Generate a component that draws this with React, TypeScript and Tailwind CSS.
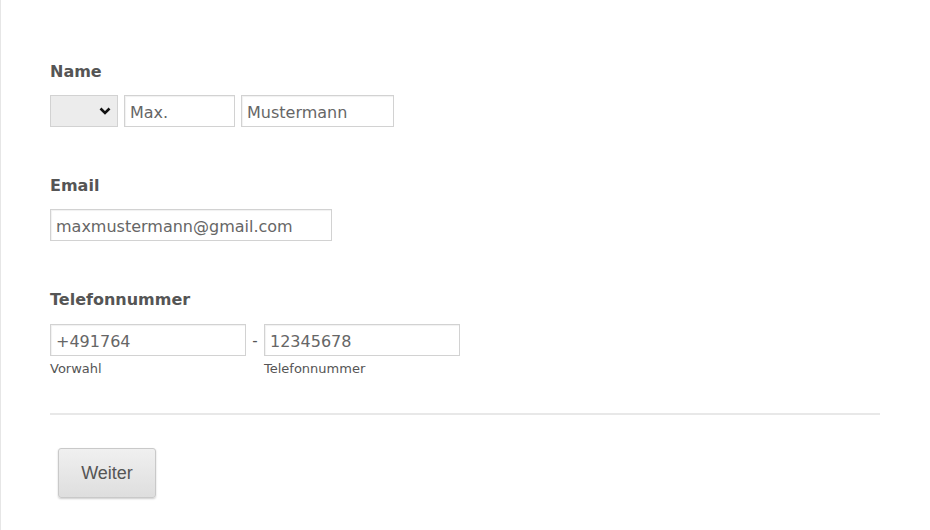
import React from 'react';

const font = { fontFamily: '"DejaVu Sans", Verdana, sans-serif' };

const inputCls =
  'h-8 border border-[#d2d2d2] bg-white px-[5px] pt-[3px] text-[16px] text-[#666] outline-none shadow-[inset_1px_1px_1px_rgba(0,0,0,0.06)]';

export default function App() {
  return (
    <div className="min-h-[530px] w-[930px] border-l border-[#e6e6e6] bg-white font-['DejaVu_Sans',Verdana,sans-serif]">
      <div className="pl-[49px] pr-[50px] pt-[62px]">
        {/* Name */}
        <div>
          <p className="text-[16px] font-bold leading-5 text-[#555]">Name</p>
          <div className="mt-[13px] flex gap-[6px]">
            <div className="flex h-8 w-[68px] items-center justify-end border border-[#d2d2d2] bg-[#ececec] pr-[6px]">
              <svg width="12" height="8" viewBox="0 0 12 8">
                <path d="M1.5 1.5 6 6l4.5-4.5" fill="none" stroke="#111" strokeWidth="2.6" />
              </svg>
            </div>
            <input className={`${inputCls} w-[111px]`} style={font} defaultValue="Max." />
            <input className={`${inputCls} w-[153px]`} style={font} defaultValue="Mustermann" />
          </div>
        </div>

        {/* Email */}
        <div className="mt-[49px]">
          <p className="text-[16px] font-bold leading-5 text-[#555]">Email</p>
          <input
            className={`${inputCls} mt-[13px] block w-[282px]`}
            style={font}
            defaultValue="maxmustermann@gmail.com"
          />
        </div>

        {/* Telefonnummer */}
        <div className="mt-[49px]">
          <p className="text-[16px] font-bold leading-5 text-[#555]">Telefonnummer</p>
          <div className="mt-[14px] flex">
            <div className="flex flex-col">
              <input className={`${inputCls} w-[196px]`} style={font} defaultValue="+491764" />
              <span className="mt-[5px] text-[13px] leading-4 text-[#555]">Vorwahl</span>
            </div>
            <span className="w-[18px] pt-[9px] text-center text-[15px] leading-4 text-[#555]">-</span>
            <div className="flex flex-col">
              <input className={`${inputCls} w-[196px]`} style={font} defaultValue="12345678" />
              <span className="mt-[5px] text-[13px] leading-4 text-[#555]">Telefonnummer</span>
            </div>
          </div>
        </div>

        <hr className="mt-[36px] w-[830px] border-t-2 border-[#e8e8e8]" />

        <button className="ml-[8px] mt-[33px] h-[50px] w-[98px] rounded-[3px] border border-[#c9c9c9] bg-gradient-to-b from-[#f0f0f0] to-[#dedede] font-['Liberation_Sans',Arial,sans-serif] text-[18px] text-[#555] shadow-[0_1px_2px_rgba(0,0,0,0.2)]">
          Weiter
        </button>
      </div>
    </div>
  );
}
